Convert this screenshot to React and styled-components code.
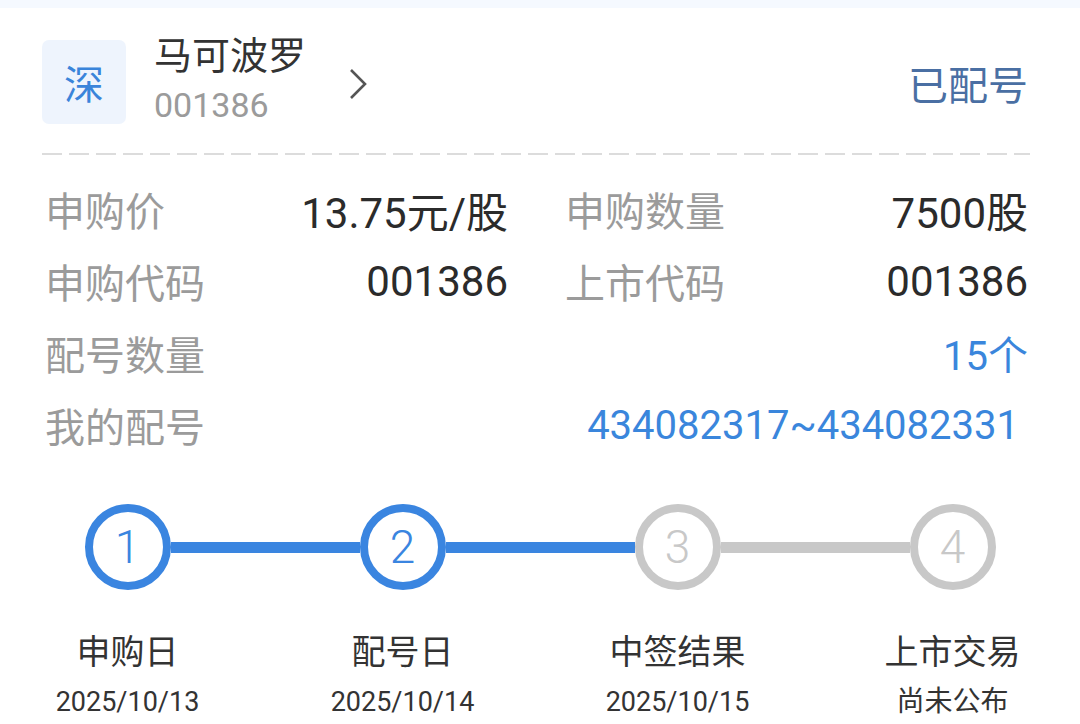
import React from 'react'
import styled, { createGlobalStyle } from 'styled-components'

const GlobalStyle = createGlobalStyle`
  html, body {
    margin: 0;
    padding: 0;
    background: #ffffff;
  }
  body {
    font-family: Roboto, "Noto Sans CJK SC", sans-serif;
    overflow: hidden;
  }
`

const Page = styled.div`
  width: 1080px;
  height: 724px;
  overflow: hidden;
  background: #fff;
`

const TopStrip = styled.div`
  height: 8px;
  background: #f5f9ff;
`

const Card = styled.div`
  padding: 31px 52px 0 42px;
`

const Header = styled.div`
  display: flex;
  align-items: center;
  height: 86px;
`

const MarketBadge = styled.div`
  width: 84px;
  height: 84px;
  border-radius: 7px;
  background: #eef4fd;
  color: #3a84da;
  font-size: 40px;
  display: flex;
  align-items: center;
  justify-content: center;
  flex-shrink: 0;
`

const NameBlock = styled.div`
  display: flex;
  flex-direction: column;
  margin-left: 28px;
  margin-top: -2px;
`

const StockName = styled.div`
  font-size: 38px;
  line-height: 44px;
  color: #333;
  margin-top: -4px;
`

const StockCode = styled.div`
  font-size: 34px;
  line-height: 40px;
  color: #9b9b9b;
  margin-top: 7px;
`

const Chevron = styled.svg`
  margin-left: 42px;
  margin-top: 4px;
`

const Status = styled.div`
  margin-left: auto;
  font-size: 40px;
  color: #4a6fa3;
  margin-top: 2px;
`

const Dashed = styled.div`
  height: 2px;
  margin-top: 28px;
  margin-right: -2px;
  background-image: linear-gradient(to right, #dcdcdc 0 20px, transparent 20px 27px);
  background-size: 27px 2px;
`

const InfoGrid = styled.div`
  display: grid;
  grid-template-columns: 1fr 1fr;
  column-gap: 57px;
  padding: 18px 0 0 3px;
`

const InfoRow = styled.div`
  display: flex;
  align-items: center;
  justify-content: space-between;
  height: 72px;
  grid-column: ${p => (p.$wide ? '1 / span 2' : 'auto')};
`

const Label = styled.span`
  font-size: 40px;
  color: #9b9b9b;
`

const Value = styled.span`
  font-size: ${p => (p.$blue ? 40 : 42)}px;
  color: ${p => (p.$blue ? '#3a86dc' : '#2b2b2b')};
  margin-right: ${p => p.$inset || 0}px;
`

const Steps = styled.div`
  display: grid;
  grid-template-columns: repeat(4, 275px);
  margin: 43px 0 0 -10px;
`

const Step = styled.div`
  display: flex;
  flex-direction: column;
  align-items: center;
`

const Track = styled.div`
  display: flex;
  align-items: center;
  width: 100%;
`

const Segment = styled.div`
  flex: 1;
  height: 11px;
  background: ${p => p.$color};
`

const Circle = styled.div`
  width: 70px;
  height: 70px;
  border-radius: 50%;
  border: 8px solid ${p => (p.$done ? '#3a85e0' : '#c8c8c8')};
  color: ${p => (p.$done ? '#3a85e0' : '#c8c8c8')};
  font-size: 46px;
  font-weight: 300;
  display: flex;
  align-items: center;
  justify-content: center;
  flex-shrink: 0;
`

const StepTitle = styled.div`
  margin-top: 42px;
  font-size: 34px;
  line-height: 40px;
  color: #333;
`

const StepDate = styled.div`
  margin-top: 13px;
  font-size: ${p => (p.$small ? 28 : 27)}px;
  line-height: 34px;
  color: #333;
`

const BLUE = '#3a85e0'
const GRAY = '#c8c8c8'

const steps = [
  { n: 1, title: '申购日', date: '2025/10/13', done: true },
  { n: 2, title: '配号日', date: '2025/10/14', done: true },
  { n: 3, title: '中签结果', date: '2025/10/15', done: false },
  { n: 4, title: '上市交易', date: '尚未公布', done: false, small: true },
]

// segment between step i and i+1 is blue while the next step is reached or current
const segColor = i => (i < 2 ? BLUE : GRAY)

const App = () => {
  return (
    <Page>
      <GlobalStyle />
      <TopStrip />
      <Card>
        <Header>
          <MarketBadge>深</MarketBadge>
          <NameBlock>
            <StockName>马可波罗</StockName>
            <StockCode>001386</StockCode>
          </NameBlock>
          <Chevron width="20" height="34" viewBox="0 0 20 34">
            <polyline points="3,3 17,17 3,31" fill="none" stroke="#555" strokeWidth="2.6" />
          </Chevron>
          <Status>已配号</Status>
        </Header>
        <Dashed />

        <InfoGrid>
          <InfoRow>
            <Label>申购价</Label>
            <Value>13.75元/股</Value>
          </InfoRow>
          <InfoRow>
            <Label>申购数量</Label>
            <Value>7500股</Value>
          </InfoRow>
          <InfoRow>
            <Label>申购代码</Label>
            <Value>001386</Value>
          </InfoRow>
          <InfoRow>
            <Label>上市代码</Label>
            <Value>001386</Value>
          </InfoRow>
          <InfoRow $wide>
            <Label>配号数量</Label>
            <Value $blue>15个</Value>
          </InfoRow>
          <InfoRow $wide>
            <Label>我的配号</Label>
            <Value $blue $inset={9}>434082317~434082331</Value>
          </InfoRow>
        </InfoGrid>
      </Card>

      <Steps>
        {steps.map((s, i) => (
          <Step key={s.n}>
            <Track>
              <Segment $color={i === 0 ? 'transparent' : segColor(i - 1)} />
              <Circle $done={s.done}>{s.n}</Circle>
              <Segment $color={i === steps.length - 1 ? 'transparent' : segColor(i)} />
            </Track>
            <StepTitle>{s.title}</StepTitle>
            <StepDate $small={s.small}>{s.date}</StepDate>
          </Step>
        ))}
      </Steps>
    </Page>
  )
}

export default App
